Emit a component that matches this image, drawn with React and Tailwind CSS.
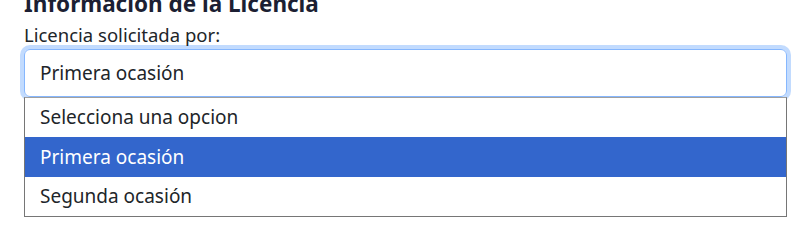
import React from "react";

const options = ["Selecciona una opcion", "Primera ocasión", "Segunda ocasión"];

const App = () => {
  const selected = 1;

  return (
    <div className="w-[808px] h-[231px] overflow-hidden bg-white font-['Noto_Sans',sans-serif] text-[#212529]">
      <div className="pl-6 pr-[21px]">
        <h3 className="text-[22.5px] font-bold leading-[26px] -mt-[9.5px] text-[#1c1f33]">Información de la Licencia</h3>
        <label className="block text-[18.5px] leading-[24px] mt-[6.5px]">Licencia solicitada por:</label>

        {/* select abierto */}
        <div className="mt-[2px] h-[48px] rounded-[6px] border border-[#86b7fe] shadow-[0_0_0_4px_rgba(13,110,253,0.25)] flex items-center pl-[15px] text-[19px]">
          Primera ocasión
        </div>
        <ul className="border border-[#767676] border-t-[#a0a0a0] bg-white">
          {options.map((opt, i) => (
            <li
              key={opt}
              className={`h-[39.3px] flex items-center pl-[15px] text-[19px] ${
                i === selected ? "bg-[#3366cc] text-white" : "text-[#212529]"
              }`}
            >
              {opt}
            </li>
          ))}
        </ul>
      </div>
    </div>
  );
};

export default App;
